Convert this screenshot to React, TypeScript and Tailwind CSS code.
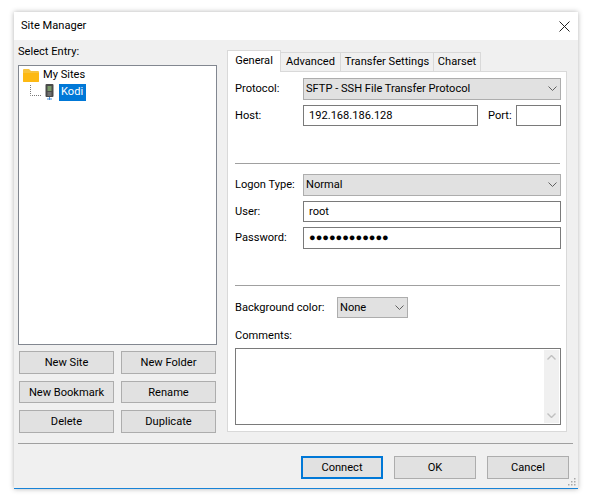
import React from "react";

function Chevron() {
  return (
    <svg width="9" height="5" viewBox="0 0 9 5" className="shrink-0">
      <path d="M0.5 0.5 L4.5 4.5 L8.5 0.5" fill="none" stroke="#606060" strokeWidth="1" />
    </svg>
  );
}

function Select({ text, className }: { text: string; className: string }) {
  return (
    <div className={`h-[21.5px] flex items-center justify-between bg-[#e1e1e1] border border-[#adadad] pl-[2px] pr-[3px] ${className}`}>
      <span>{text}</span>
      <Chevron />
    </div>
  );
}

function Input({ text, className }: { text?: string; className: string }) {
  return (
    <div className={`h-[21.5px] flex items-center bg-white border border-[#7a7a7a] pl-[5px] ${className}`}>
      {text}
    </div>
  );
}

function Btn({ text, className, primary }: { text: string; className: string; primary?: boolean }) {
  return (
    <div className={`flex items-center justify-center bg-[#e1e1e1] ${primary ? "border-2 border-[#0078d7]" : "border border-[#adadad]"} ${className}`}>
      {text}
    </div>
  );
}

function Label({ text }: { text: string }) {
  return <div className="w-[68px] shrink-0">{text}</div>;
}

function Tab({ text, w }: { text: string; w: string }) {
  return (
    <div className={`${w} h-[19px] flex items-center justify-center bg-[#f0f0f0] border border-b-0 border-[#d9d9d9] -ml-[1px]`}>
      {text}
    </div>
  );
}

export default function App() {
  return (
    <div className="w-[592px] h-[501px] bg-white pt-[12px] pl-[14px] text-[11.1px] leading-none text-[#000] font-['Roboto',sans-serif]">
      <div className="w-[564px] h-[477px] flex flex-col shadow-[0_0_5px_rgba(0,0,0,0.3)] relative">
        <div className="h-[28px] shrink-0 bg-white flex items-center justify-between pl-[7px] pr-[8px]">
          <span>Site Manager</span>
          <svg width="11" height="11" viewBox="0 0 11 11">
            <path d="M0.5 0.5 L10.5 10.5 M10.5 0.5 L0.5 10.5" stroke="#222" strokeWidth="1" fill="none" />
          </svg>
        </div>
        <div className="flex-1 bg-[#f0f0f0] border-b border-[#1883d7] flex flex-col pl-[4px] pr-[5px]">
          <div className="flex h-[393px] shrink-0">
            {/* left */}
            <div className="w-[199px] shrink-0 flex flex-col">
              <div className="h-[24.5px] pt-[6px]">Select Entry:</div>
              <div className="h-[280.5px] shrink-0 bg-white border border-[#828790] pl-[4px] pt-[1px]">
                <div className="flex items-center h-[17px]">
                  <svg width="16" height="14" viewBox="0 0 16 14" className="shrink-0">
                    <path d="M0 2 Q0 1 1 1 H6 L8 3 H15 Q16 3 16 4 V13 Q16 14 15 14 H1 Q0 14 0 13 Z" fill="#f8c33c" />
                    <path d="M0 5 H16 V13 Q16 14 15 14 H1 Q0 14 0 13 Z" fill="#fdb913" />
                  </svg>
                  <span className="ml-[4px]">My Sites</span>
                </div>
                <div className="flex items-center h-[17px]">
                  <svg width="14" height="14" viewBox="0 0 14 14" className="ml-[7px] shrink-0">
                    <path d="M0.5 0 V10.5 H11" stroke="#777" strokeWidth="1" strokeDasharray="1 1" fill="none" />
                  </svg>
                  <svg width="9" height="16" viewBox="0 0 9 16" className="ml-[1px] shrink-0">
                    <rect x="0.5" y="0" width="8" height="13" rx="1" fill="#4a4a4a" />
                    <rect x="2.5" y="2" width="4" height="5" fill="#7a9a6a" />
                    <rect x="2.5" y="8" width="4" height="4" fill="#707070" />
                    <path d="M4.5 13 V16 M2 15 H7" stroke="#4a90d9" strokeWidth="1" />
                  </svg>
                  <span className="ml-[5px] h-[17px] w-[27px] pl-[2px] flex items-center bg-[#0078d7] text-white">Kodi</span>
                </div>
              </div>
              <div className="flex flex-col pl-[1px] pr-[1px] pt-[6.3px] gap-[7px]">
                <div className="flex justify-between">
                  <Btn text="New Site" className="w-[95px] h-[22.5px]" />
                  <Btn text="New Folder" className="w-[95px] h-[22.5px]" />
                </div>
                <div className="flex justify-between">
                  <Btn text="New Bookmark" className="w-[95px] h-[22.5px]" />
                  <Btn text="Rename" className="w-[95px] h-[22.5px]" />
                </div>
                <div className="flex justify-between">
                  <Btn text="Delete" className="w-[95px] h-[22.5px]" />
                  <Btn text="Duplicate" className="w-[95px] h-[22.5px]" />
                </div>
              </div>
            </div>
            {/* right */}
            <div className="w-[340px] ml-[10px] shrink-0 flex flex-col pt-[10px]">
              <div className="flex items-end h-[21px] relative z-10 pl-[1px]">
                <div className="w-[54px] h-[22px] -mb-[1px] flex items-center justify-center bg-white border border-b-0 border-[#d9d9d9] -ml-[1px] pb-[1px] relative z-10">General</div>
                <Tab text="Advanced" w="w-[61px]" />
                <Tab text="Transfer Settings" w="w-[94px]" />
                <Tab text="Charset" w="w-[48px]" />
              </div>
              <div className="h-[361px] bg-white border border-[#d9d9d9] pl-[7px] pr-[5px] pt-[6px]">
                <div className="flex items-center">
                  <Label text="Protocol:" />
                  <Select text="SFTP - SSH File Transfer Protocol" className="w-[258px]" />
                </div>
                <div className="flex items-center mt-[5px]">
                  <Label text="Host:" />
                  <Input text="192.168.186.128" className="w-[175px]" />
                  <span className="ml-[10px] w-[28px]">Port:</span>
                  <Input className="w-[45px]" />
                </div>
                <div className="h-px bg-[#a0a0a0] mt-[36.5px] w-[325px]" />
                <div className="flex items-center mt-[10.5px]">
                  <Label text="Logon Type:" />
                  <Select text="Normal" className="w-[258px]" />
                </div>
                <div className="flex items-center mt-[5px]">
                  <Label text="User:" />
                  <Input text="root" className="w-[258px]" />
                </div>
                <div className="flex items-center mt-[5px]">
                  <Label text="Password:" />
                  <Input text="●●●●●●●●●●●●" className="w-[258px] text-[11px]" />
                </div>
                <div className="h-px bg-[#a0a0a0] mt-[36.5px] w-[325px]" />
                <div className="flex items-center mt-[10.5px]">
                  <div className="w-[102px] shrink-0">Background color:</div>
                  <Select text="None" className="w-[71px]" />
                </div>
                <div className="mt-[12px] h-[13px]">Comments:</div>
                <div className="mt-[5px] w-[326px] h-[76.5px] bg-white border border-[#7a7a7a] flex justify-end">
                  <div className="w-[15px] mr-[1px] mt-[1px] mb-[1px] bg-[#f0f0f0] flex flex-col justify-between items-center py-[5px]">
                    <svg width="9" height="5" viewBox="0 0 9 5"><path d="M0.5 4.5 L4.5 0.5 L8.5 4.5" fill="none" stroke="#c0c0c0" strokeWidth="1.4" /></svg>
                    <svg width="9" height="5" viewBox="0 0 9 5"><path d="M0.5 0.5 L4.5 4.5 L8.5 0.5" fill="none" stroke="#c0c0c0" strokeWidth="1.4" /></svg>
                  </div>
                </div>
              </div>
            </div>
          </div>
          <div className="h-px bg-[#a0a0a0] mt-[10px] w-[555px] shrink-0" />
          <div className="flex mt-[12px] pl-[283px]">
            <Btn primary text="Connect" className="w-[82px] h-[22.5px]" />
            <Btn text="OK" className="w-[82px] h-[22.5px] ml-[11px]" />
            <Btn text="Cancel" className="w-[82px] h-[22.5px] ml-[11px]" />
          </div>
        </div>
        <svg width="10" height="10" viewBox="0 0 10 10" className="absolute right-[1px] bottom-[2px]">
          <g fill="#a8a8a8">
            <rect x="7" y="1" width="1.5" height="1.5" />
            <rect x="4" y="4" width="1.5" height="1.5" />
            <rect x="7" y="4" width="1.5" height="1.5" />
            <rect x="1" y="7" width="1.5" height="1.5" />
            <rect x="4" y="7" width="1.5" height="1.5" />
            <rect x="7" y="7" width="1.5" height="1.5" />
          </g>
        </svg>
      </div>
    </div>
  );
}
